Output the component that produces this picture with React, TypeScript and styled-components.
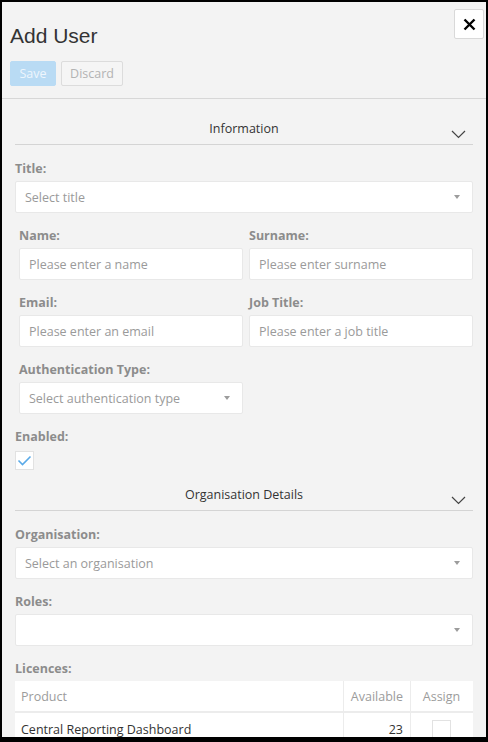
import React from "react";
import styled, { createGlobalStyle } from "styled-components";

const GlobalStyle = createGlobalStyle`
  html, body {
    margin: 0;
    padding: 0;
    background: #000;
  }
  * {
    box-sizing: border-box;
  }
`;

const Frame = styled.div`
  width: 488px;
  height: 742px;
  border: 2px solid #000;
  border-bottom-width: 5px;
  background: #f3f3f3;
  overflow: hidden;
  font-family: "Open Sans", "Noto Sans", sans-serif;
  font-size: 12.5px;
  color: #333;
`;

const Header = styled.div`
  display: flex;
  justify-content: space-between;
  align-items: flex-start;
  padding: 7px 2px 12px 8px;
  border-bottom: 1px solid #d7d7d7;
`;

const TitleBlock = styled.div`
  margin-top: 15px;
`;

const Title = styled.h1`
  margin: 0;
  font-family: "Liberation Sans", Arial, sans-serif;
  font-size: 21px;
  line-height: 24px;
  font-weight: normal;
  color: #333;
`;

const Actions = styled.div`
  display: flex;
  gap: 5px;
  margin-top: 13px;
`;

const ActionButton = styled.button<{ $primary?: boolean }>`
  height: 25px;
  width: ${(p) => (p.$primary ? "46px" : "62px")};
  padding: 0;
  border-radius: 2px;
  font-family: inherit;
  font-size: 12.5px;
  border: 1px solid ${(p) => (p.$primary ? "#b9dbf4" : "#dcdcdc")};
  background: ${(p) => (p.$primary ? "#b9dbf4" : "#f5f5f5")};
  color: ${(p) => (p.$primary ? "#eef6fd" : "#b3b3b3")};
`;

const CloseButton = styled.button`
  width: 30px;
  height: 30px;
  padding: 0;
  display: flex;
  align-items: center;
  justify-content: center;
  background: #fff;
  border: 1px solid #d9d9d9;
  border-radius: 2px;
`;

const Body = styled.div`
  display: flex;
  flex-direction: column;
  gap: 16px;
  padding: 21px 13px 0 13px;
`;

const Section = styled.section`
  display: flex;
  flex-direction: column;
  gap: 14px;
`;

const SectionHeader = styled.div`
  display: grid;
  grid-template-columns: 1fr auto 1fr;
  padding-bottom: 6px;
  margin-bottom: 1px;
  border-bottom: 1px solid #d4d4d4;
  line-height: 18px;
  color: #333;
`;

const SectionTitle = styled.span`
  grid-column: 2;
`;

const Chevron = styled.svg`
  grid-column: 3;
  justify-self: end;
  align-self: end;
  margin: 0 7px -1px 0;
`;

const Field = styled.div`
  display: flex;
  flex-direction: column;
`;

const Label = styled.label`
  font-weight: 700;
  color: #8c8c8c;
  line-height: 18px;
  margin-bottom: 3px;
`;

const Pair = styled.div`
  display: grid;
  grid-template-columns: 224px 224px;
  column-gap: 6px;
  row-gap: 14px;
  padding-left: 4px;
`;

const Input = styled.div`
  height: 32px;
  display: flex;
  align-items: center;
  justify-content: space-between;
  padding: 0 12px 0 9px;
  background: #fff;
  border: 1px solid #e8e8e8;
  border-radius: 2px;
  color: #9a9a9a;
`;

const Caret = styled.span`
  width: 0;
  height: 0;
  border-left: 3.5px solid transparent;
  border-right: 3.5px solid transparent;
  border-top: 4px solid #9c9c9c;
`;

const CheckBox = styled.div<{ $small?: boolean }>`
  width: 19px;
  height: 19px;
  background: #fff;
  border: 1px solid #e2e2e2;
  display: flex;
  align-items: center;
  justify-content: center;
  margin-top: ${(p) => (p.$small ? "0" : "2px")};
`;

const Table = styled.div`
  display: grid;
  grid-template-columns: 328px 67px 63px;
  background: #fff;
`;

const HeadCell = styled.div<{ $align?: string }>`
  height: 32px;
  display: flex;
  align-items: center;
  justify-content: ${(p) => p.$align || "flex-start"};
  padding: 0 7px 0 6px;
  color: #9c9c9c;
  border-bottom: 2px solid #ececec;
  & + & {
    border-left: 1px solid #ececec;
  }
`;

const Cell = styled.div<{ $align?: string }>`
  height: 32px;
  display: flex;
  align-items: center;
  justify-content: ${(p) => p.$align || "flex-start"};
  padding: 0 7px 0 6px;
  color: #333;
  & + & {
    border-left: 1px solid #ececec;
  }
`;

const SelectBox = ({ placeholder }: { placeholder?: string }) => (
  <Input>
    <span>{placeholder}</span>
    <Caret />
  </Input>
);

const SectionHead = ({ title }: { title: string }) => (
  <SectionHeader>
    <SectionTitle>{title}</SectionTitle>
    <Chevron width="15" height="9" viewBox="0 0 15 9">
      <polyline points="1,1 7.5,7.5 14,1" fill="none" stroke="#444" strokeWidth="1.2" />
    </Chevron>
  </SectionHeader>
);

export default function App() {
  return (
    <>
      <GlobalStyle />
      <Frame>
        <Header>
          <TitleBlock>
            <Title>Add User</Title>
            <Actions>
              <ActionButton $primary>Save</ActionButton>
              <ActionButton>Discard</ActionButton>
            </Actions>
          </TitleBlock>
          <CloseButton>
            <svg width="13" height="13" viewBox="0 0 13 13">
              <path d="M1.5 1.5 L11.5 11.5 M11.5 1.5 L1.5 11.5" stroke="#000" strokeWidth="2.4" />
            </svg>
          </CloseButton>
        </Header>

        <Body>
          <Section>
            <SectionHead title="Information" />
            <Field>
              <Label>Title:</Label>
              <SelectBox placeholder="Select title" />
            </Field>
            <Pair>
              <Field>
                <Label>Name:</Label>
                <Input>Please enter a name</Input>
              </Field>
              <Field>
                <Label>Surname:</Label>
                <Input>Please enter surname</Input>
              </Field>
              <Field>
                <Label>Email:</Label>
                <Input>Please enter an email</Input>
              </Field>
              <Field>
                <Label>Job Title:</Label>
                <Input>Please enter a job title</Input>
              </Field>
              <Field>
                <Label>Authentication Type:</Label>
                <SelectBox placeholder="Select authentication type" />
              </Field>
            </Pair>
            <Field>
              <Label>Enabled:</Label>
              <CheckBox>
                <svg width="15" height="12" viewBox="0 0 15 12">
                  <polyline points="1.5,5.5 5.5,9.5 13.5,1.5" fill="none" stroke="#5aaae8" strokeWidth="1.6" />
                </svg>
              </CheckBox>
            </Field>
          </Section>

          <Section>
            <SectionHead title="Organisation Details" />
            <Field>
              <Label>Organisation:</Label>
              <SelectBox placeholder="Select an organisation" />
            </Field>
            <Field>
              <Label>Roles:</Label>
              <SelectBox />
            </Field>
            <Field>
              <Label>Licences:</Label>
              <Table>
                <HeadCell>Product</HeadCell>
                <HeadCell $align="flex-end">Available</HeadCell>
                <HeadCell $align="center">Assign</HeadCell>
                <Cell>Central Reporting Dashboard</Cell>
                <Cell $align="flex-end">23</Cell>
                <Cell $align="center">
                  <CheckBox $small />
                </Cell>
              </Table>
            </Field>
          </Section>
        </Body>
      </Frame>
    </>
  );
}
